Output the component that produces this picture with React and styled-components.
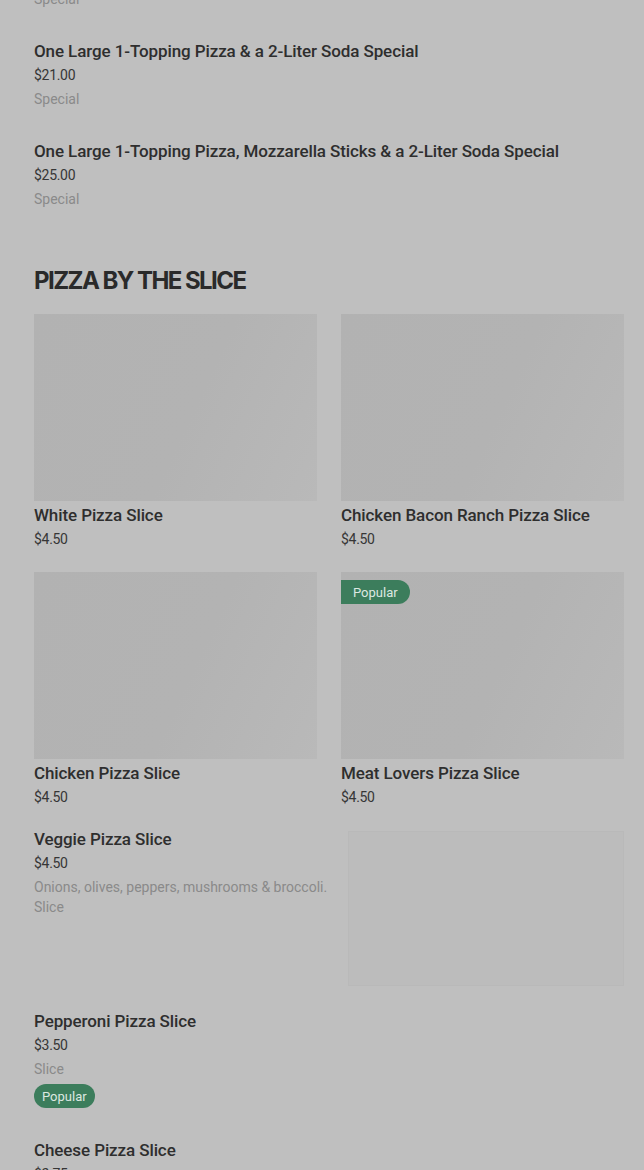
import React from 'react';
import styled, { createGlobalStyle } from 'styled-components';

const GlobalStyle = createGlobalStyle`
  html, body {
    margin: 0;
    padding: 0;
    background: #bfbfbf;
  }
  body {
    font-family: Roboto, "Liberation Sans", sans-serif;
    color: #2f2f2f;
    overflow: hidden;
  }
`;

const Page = styled.main`
  padding: 0 20px 0 34px;
  margin-top: -76px;
`;

const List = styled.div`
  display: flex;
  flex-direction: column;
`;

const Item = styled.div`
  display: ${p => (p.$withImage ? 'grid' : 'block')};
  grid-template-columns: 1fr 276px;
  column-gap: 14px;
  padding: ${p => (p.$withImage ? '15px 0 8px' : '15px 0')};
`;

const ItemText = styled.div`
  display: flex;
  flex-direction: column;
  align-items: flex-start;
`;

const Title = styled.div`
  font-size: 17px;
  font-weight: 500;
  line-height: 24px;
  color: #2e2e2e;
  letter-spacing: -0.1px;
`;

const Price = styled.div`
  font-size: 14px;
  line-height: 24px;
  color: #363636;
  letter-spacing: -0.3px;
`;

const Note = styled.div`
  font-size: 14px;
  line-height: 20px;
  color: #8a8a8a;
  padding-top: ${p => (p.$tight ? '0' : '2px')};
`;

const SectionTitle = styled.h2`
  margin: 41px 0 17px;
  font-family: Inter, Roboto, sans-serif;
  font-size: 24px;
  font-weight: 700;
  line-height: 32px;
  letter-spacing: -1.55px;
  color: #2a2a2a;
`;

const Grid = styled.div`
  display: grid;
  grid-template-columns: 1fr 1fr;
  column-gap: 24px;
  row-gap: 21px;
  margin-bottom: 3px;
`;

const Card = styled.div`
  display: flex;
  flex-direction: column;
`;

const Photo = styled.div`
  position: relative;
  height: 187px;
  background: linear-gradient(115deg, #b2b2b2 0%, #b3b3b3 55%, #b9b9b9 100%);
  margin-bottom: 2px;
`;

const ThumbPhoto = styled.div`
  height: 155px;
  margin-top: 4px;
  background: #bcbcbc;
  box-shadow: inset 0 0 0 1px #b9b9b9;
`;

const Badge = styled.span`
  display: inline-flex;
  align-items: center;
  height: 24px;
  padding: ${p => (p.$flag ? '0 12px' : '0 8px')};
  border-radius: ${p => (p.$flag ? '0 12px 12px 0' : '12px')};
  background: #3c7d5c;
  color: #dde8e1;
  font-size: 13px;
  margin-top: ${p => (p.$flag ? '0' : '5px')};
  ${p => p.$flag && 'position: absolute; top: 8px; left: 0;'}
`;

const specials = [
  { name: 'Two Large 1-Topping Pizzas Special', price: '$30.00', note: 'Special' },
  { name: 'One Large 1-Topping Pizza & a 2-Liter Soda Special', price: '$21.00', note: 'Special' },
  {
    name: 'One Large 1-Topping Pizza, Mozzarella Sticks & a 2-Liter Soda Special',
    price: '$25.00',
    note: 'Special',
  },
];

const slices = [
  { name: 'White Pizza Slice', price: '$4.50' },
  { name: 'Chicken Bacon Ranch Pizza Slice', price: '$4.50' },
  { name: 'Chicken Pizza Slice', price: '$4.50' },
  { name: 'Meat Lovers Pizza Slice', price: '$4.50', popular: true },
];

export default function App() {
  return (
    <>
      <GlobalStyle />
      <Page>
        <List>
          {specials.map(s => (
            <Item key={s.name}>
              <Title>{s.name}</Title>
              <Price>{s.price}</Price>
              <Note>{s.note}</Note>
            </Item>
          ))}
        </List>

        <SectionTitle>PIZZA BY THE SLICE</SectionTitle>

        <Grid>
          {slices.map(s => (
            <Card key={s.name}>
              <Photo>{s.popular && <Badge $flag>Popular</Badge>}</Photo>
              <Title>{s.name}</Title>
              <Price>{s.price}</Price>
            </Card>
          ))}
        </Grid>

        <List>
          <Item $withImage>
            <ItemText>
              <Title>Veggie Pizza Slice</Title>
              <Price>$4.50</Price>
              <Note>Onions, olives, peppers, mushrooms &amp; broccoli.</Note>
              <Note $tight>Slice</Note>
            </ItemText>
            <ThumbPhoto />
          </Item>
          <Item>
            <ItemText>
              <Title>Pepperoni Pizza Slice</Title>
              <Price>$3.50</Price>
              <Note>Slice</Note>
              <Badge>Popular</Badge>
            </ItemText>
          </Item>
          <Item>
            <Title>Cheese Pizza Slice</Title>
            <Price>$2.75</Price>
            <Note>Slice</Note>
          </Item>
        </List>
      </Page>
    </>
  );
}
